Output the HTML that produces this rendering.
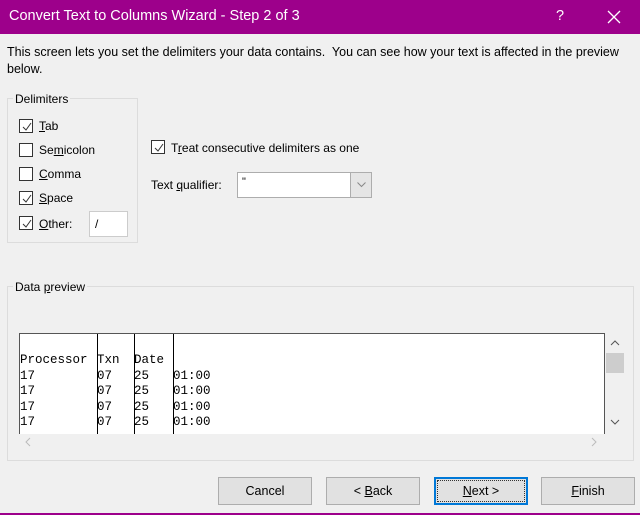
<!DOCTYPE html>
<html><head><style>
*{margin:0;padding:0;box-sizing:border-box}
body{width:640px;height:515px;background:#f0f0f0;font-family:"Liberation Sans",sans-serif;font-size:12px;color:#000;position:relative;overflow:hidden}
.a{position:absolute}
.title{left:0;top:0;width:640px;height:34px;background:#9d008b;color:#fff;font-size:14.5px}
.cb{width:14px;height:14px;border:1px solid #333;background:#fff}
.cb svg{position:absolute;left:1px;top:1px}
.grp{border:1px solid #dcdcdc}
.btn{height:28px;width:94px;background:#e1e1e1;border:1px solid #adadad;text-align:center;line-height:26px;font-size:12.5px}
.mono{font-family:"Liberation Mono",monospace;font-size:12.5px;color:#000;line-height:15.5px;white-space:pre}
u{text-decoration:underline}
</style></head><body>
<div class="a title"><span class="a" style="left:9px;top:8px">Convert Text to Columns Wizard - Step 2 of 3</span>
<span class="a" style="left:556px;top:8px">?</span>
<svg class="a" style="left:607px;top:10px" width="14" height="14"><path d="M1 1L13 13M13 1L1 13" stroke="#fff" stroke-width="1.3"/></svg></div>
<div class="a" style="left:7px;top:44px;width:615px;line-height:17px;font-size:12.5px">This screen lets you set the delimiters your data contains.&nbsp; You can see how your text is affected in the preview below.</div>

<div class="a grp" style="left:7px;top:98px;width:131px;height:145px"></div>
<div class="a" style="left:13px;top:92px;background:#f0f0f0;padding:0 2px">Delimiters</div>

<div class="a cb" style="left:19px;top:119px"><svg width="12" height="12"><path d="M2 6L5 9L10 2" stroke="#333" fill="none"/></svg></div>
<div class="a" style="left:39px;top:119px"><u>T</u>ab</div>
<div class="a cb" style="left:19px;top:143px"></div>
<div class="a" style="left:39px;top:143px">Se<u>m</u>icolon</div>
<div class="a cb" style="left:19px;top:167px"></div>
<div class="a" style="left:39px;top:167px"><u>C</u>omma</div>
<div class="a cb" style="left:19px;top:191px"><svg width="12" height="12"><path d="M2 6L5 9L10 2" stroke="#333" fill="none"/></svg></div>
<div class="a" style="left:39px;top:191px"><u>S</u>pace</div>
<div class="a cb" style="left:19px;top:216px"><svg width="12" height="12"><path d="M2 6L5 9L10 2" stroke="#333" fill="none"/></svg></div>
<div class="a" style="left:39px;top:217px"><u>O</u>ther:</div>
<div class="a" style="left:89px;top:211px;width:39px;height:26px;background:#fff;border:1px solid #ccc;padding:5px 0 0 5px">/</div>

<div class="a cb" style="left:151px;top:140px"><svg width="12" height="12"><path d="M2 6L5 9L10 2" stroke="#333" fill="none"/></svg></div>
<div class="a" style="left:171px;top:141px">T<u>r</u>eat consecutive delimiters as one</div>
<div class="a" style="left:151px;top:178px">Text <u>q</u>ualifier:</div>
<div class="a" style="left:237px;top:172px;width:135px;height:26px;background:#fff;border:1px solid #adadad"></div>
<div class="a" style="left:242px;top:176px;font-size:11px">"</div>
<div class="a" style="left:350px;top:173px;width:21px;height:24px;background:#e5e5e5;border-left:1px solid #adadad"><svg class="a" style="left:6px;top:9px" width="9" height="6"><path d="M0.5 0.5L4.5 4.5L8.5 0.5" stroke="#888" fill="none"/></svg></div>

<div class="a grp" style="left:7px;top:286px;width:627px;height:175px"></div>
<div class="a" style="left:13px;top:280px;background:#f0f0f0;padding:0 2px">Data <u>p</u>review</div>
<div class="a" style="left:19px;top:333px;width:586px;height:101px;background:#fff;border:1px solid #555;border-bottom:none;overflow:hidden">
<div class="a" style="left:77px;top:0;width:1px;height:101px;background:#000"></div>
<div class="a" style="left:114px;top:0;width:1px;height:101px;background:#000"></div>
<div class="a" style="left:153px;top:0;width:1px;height:101px;background:#000"></div>
<div class="a mono" style="left:0;top:19px">Processor
17
17
17
17</div>
<div class="a mono" style="left:77px;top:19px">Txn
07
07
07
07</div>
<div class="a mono" style="left:114px;top:19px">Date
25
25
25
25</div>
<div class="a mono" style="left:153px;top:19px">
01:00
01:00
01:00
01:00</div>
</div>
<svg class="a" style="left:610px;top:339px" width="10" height="8"><path d="M1 6L5 2L9 6" stroke="#555" fill="none"/></svg>
<div class="a" style="left:606px;top:353px;width:18px;height:20px;background:#cdcdcd"></div>
<svg class="a" style="left:610px;top:418px" width="10" height="8"><path d="M1 2L5 6L9 2" stroke="#555" fill="none"/></svg>
<svg class="a" style="left:24px;top:437px" width="8" height="10"><path d="M6 1L2 5L6 9" stroke="#bbb" fill="none"/></svg>
<svg class="a" style="left:590px;top:437px" width="8" height="10"><path d="M2 1L6 5L2 9" stroke="#bbb" fill="none"/></svg>

<div class="a btn" style="left:218px;top:477px">Cancel</div>
<div class="a btn" style="left:326px;top:477px">&lt; <u>B</u>ack</div>
<div class="a btn" style="left:434px;top:477px;border:2px solid #0078d7;line-height:24px"><div style="border:1px dotted #333;margin:1px;height:22px;line-height:20px"><u>N</u>ext &gt;</div></div>
<div class="a btn" style="left:541px;top:477px"><u>F</u>inish</div>
<div class="a" style="left:0;top:513px;width:640px;height:2px;background:#9d008b"></div>
</body></html>
